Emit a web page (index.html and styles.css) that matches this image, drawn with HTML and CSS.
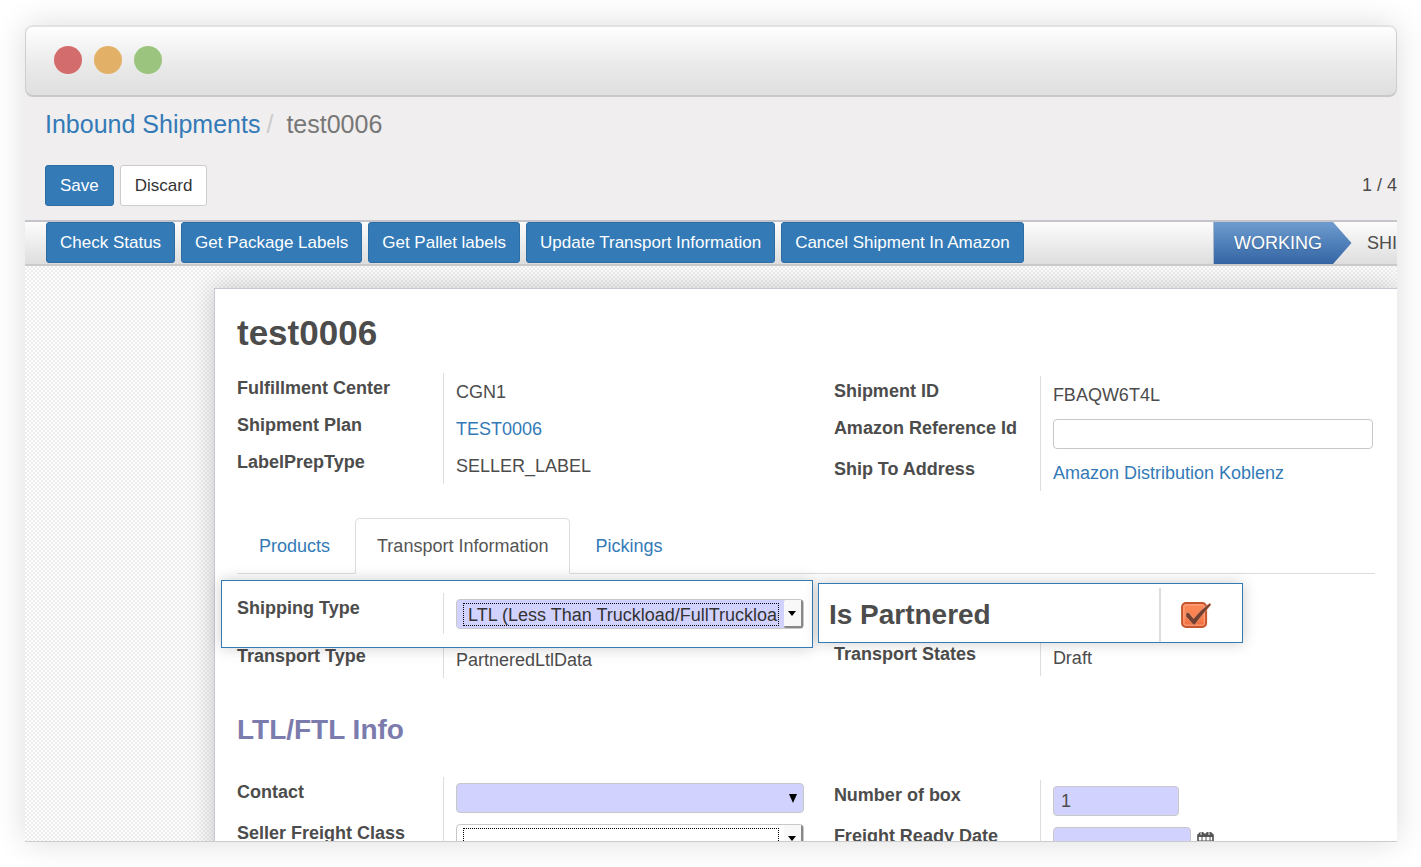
FILE: index.html
```html
<!DOCTYPE html>
<html lang="en">
<head>
<meta charset="utf-8">
<title>Inbound Shipments / test0006</title>
<link rel="stylesheet" href="styles.css">
</head>
<body>
<div class="window">
  <div class="titlebar">
    <span class="dot dot-red"></span>
    <span class="dot dot-amber"></span>
    <span class="dot dot-green"></span>
  </div>

  <header class="control-panel">
    <nav class="breadcrumb"><a href="#">Inbound Shipments</a><span class="slash">/</span><span class="current">test0006</span></nav>
    <div class="control-row">
      <div class="actions">
        <button class="btn btn-primary" type="button">Save</button>
        <button class="btn btn-default" type="button">Discard</button>
      </div>
      <span class="pager">1 / 4</span>
    </div>
  </header>

  <div class="statusbar">
    <div class="actions">
      <button class="btn btn-primary" type="button">Check Status</button>
      <button class="btn btn-primary" type="button">Get Package Labels</button>
      <button class="btn btn-primary" type="button">Get Pallet labels</button>
      <button class="btn btn-primary" type="button">Update Transport Information</button>
      <button class="btn btn-primary" type="button">Cancel Shipment In Amazon</button>
    </div>
    <div class="stages">
      <span class="stage-active">WORKING</span>
      <svg class="stage-arrow" viewBox="0 0 19 43" preserveAspectRatio="none" aria-hidden="true">
        <defs><linearGradient id="stage" x1="0" y1="0" x2="0" y2="1"><stop offset="0" stop-color="#6e9ccf"/><stop offset="1" stop-color="#3465a4"/></linearGradient></defs>
        <path d="M0 0L18.500 21.500L0 43Z" fill="url(#stage)"/>
      </svg>
      <span class="stage-next">SHI</span>
    </div>
  </div>

  <div class="backdrop">
    <main class="sheet">
      <h1 class="title">test0006</h1>

      <div class="groups">
        <div class="group">
          <div class="row"><span class="name">Fulfillment Center</span><span class="value">CGN1</span></div>
          <div class="row"><span class="name">Shipment Plan</span><span class="value"><a href="#">TEST0006</a></span></div>
          <div class="row"><span class="name">LabelPrepType</span><span class="value">SELLER_LABEL</span></div>
        </div>
        <div class="group">
          <div class="row"><span class="name">Shipment ID</span><span class="value">FBAQW6T4L</span></div>
          <div class="row"><label class="name" for="reference">Amazon Reference Id</label><span class="value field"><input class="input" id="reference" type="text"></span></div>
          <div class="row"><span class="name">Ship To Address</span><span class="value"><a href="#">Amazon Distribution Koblenz</a></span></div>
        </div>
      </div>

      <nav class="tabs">
        <a class="tab" href="#">Products</a>
        <a class="tab tab-active" href="#">Transport Information</a>
        <a class="tab" href="#">Pickings</a>
      </nav>

      <div class="groups transport">
        <div class="group">
          <div class="callout callout-type">
            <div class="row">
              <label class="name" for="shipping">Shipping Type</label>
              <span class="value field">
                <span class="combo required">
                  <select class="combo-select" id="shipping"><option>LTL (Less Than Truckload/FullTruckload)</option></select>
                  <span class="combo-arrow"></span>
                </span>
              </span>
            </div>
          </div>
          <div class="row"><span class="name">Transport Type</span><span class="value">PartneredLtlData</span></div>
        </div>
        <div class="group">
          <div class="callout callout-partnered">
            <label class="partnered-name" for="partnered">Is Partnered</label>
            <span class="partnered-value">
              <input class="check" id="partnered" type="checkbox" checked>
              <svg class="check-icon" viewBox="0 0 32 28" aria-hidden="true">
                <defs><linearGradient id="orange" x1="0" y1="0" x2="0" y2="1"><stop offset="0" stop-color="#f98a5c"/><stop offset=".6" stop-color="#fb7f4d"/><stop offset="1" stop-color="#e96a3c"/></linearGradient></defs>
                <rect x="1" y="1" width="25" height="25" rx="4" fill="url(#orange)" stroke="#c4552f" stroke-width="2"/>
                <rect x="3" y="3" width="21" height="21" rx="2" fill="none" stroke="#ffac87" stroke-width="1"/>
                <path d="M5 11L8 11L13 17Q20 8 30 1L31 3Q22 13 14 24L12 23L5 15Z" fill="#74402f" stroke="#ffb394" stroke-width=".6"/>
              </svg>
            </span>
          </div>
          <div class="row"><span class="name">Transport States</span><span class="value">Draft</span></div>
        </div>
      </div>

      <h2 class="section">LTL/FTL Info</h2>

      <div class="groups">
        <div class="group">
          <div class="row">
            <label class="name" for="contact">Contact</label>
            <span class="value field">
              <span class="picker">
                <input class="input required" id="contact" type="text">
                <svg class="picker-arrow" viewBox="0 0 8 9" aria-hidden="true"><path d="M0 0H8L4 9Z"/></svg>
              </span>
            </span>
          </div>
          <div class="row">
            <label class="name" for="freight">Seller Freight Class</label>
            <span class="value field">
              <span class="combo">
                <select class="combo-select" id="freight"><option></option></select>
                <span class="combo-arrow"></span>
              </span>
            </span>
          </div>
        </div>
        <div class="group">
          <div class="row"><label class="name" for="boxes">Number of box</label><span class="value field"><input class="input required input-number" id="boxes" type="text" value="1"></span></div>
          <div class="row">
            <label class="name" for="ready">Freight Ready Date</label>
            <span class="value field">
              <input class="input required input-date" id="ready" type="text">
              <svg class="calendar" viewBox="0 0 17 20" aria-hidden="true">
                <path d="M1 5H16V18H1Z" fill="#fff" stroke="#444" stroke-width="1.500"/>
                <path d="M1 7V4L3 2H6L8 4L10 2H14L16 4V7Z" fill="#555"/>
                <path d="M4 2V5M12 2V5" stroke="#eee"/>
                <path d="M1 11H16M1 14H16M5 7V18M9 7V18M13 7V18" stroke="#555"/>
              </svg>
            </span>
          </div>
        </div>
      </div>
    </main>
  </div>
</div>
</body>
</html>
```
FILE: styles.css
```css
* { box-sizing: border-box; }

body {
  margin: 0;
  padding: 25px 24px 25px 25px;
  background: #fff;
  color: #4c4c4c;
  font: 18px/22px "Liberation Sans", Arial, sans-serif;
}

a { color: #337ab7; text-decoration: none; }

button, input, select { font: inherit; color: inherit; }

.window {
  display: flex;
  flex-direction: column;
  height: calc(100vh - 50px);
  overflow: hidden;
  border-bottom: 1px solid #ccc;
  border-radius: 8px 8px 0 0;
  background: #f0eeee;
  box-shadow: 0 0 32px rgba(0, 0, 0, .14);
}

.titlebar {
  display: flex;
  flex: none;
  align-items: center;
  gap: 12px;
  height: 72px;
  padding: 0 28px 2px;
  border: 1px solid #cfcfcf;
  border-top: 2px solid #e2e2e2;
  border-bottom: 2px solid #c9c9c9;
  border-radius: 8px;
  background: linear-gradient(#fefefe, #e9e9e9 60%, #dfdfdf);
}

.dot { width: 28px; height: 28px; border-radius: 50%; }
.dot-red { background: #d36c6c; }
.dot-amber { background: #e2b167; }
.dot-green { background: #9bc57e; }

.control-panel {
  flex: none;
  padding: 12px 0 14px 20px;
  border-bottom: 2px solid #c4c4ca;
}

.breadcrumb { font-size: 25px; line-height: 30px; }
.breadcrumb .slash { margin: 0 13px 0 6px; color: #ccc; }
.breadcrumb .current { color: #777; }

.control-row {
  display: flex;
  align-items: center;
  justify-content: space-between;
  margin-top: 26px;
}

.pager { margin-bottom: 2px; }

.actions { display: flex; gap: 6px; }

.btn {
  height: 41px;
  padding: 0 14px;
  border: 1px solid #2e6da4;
  border-radius: 3px;
  font-size: 17px;
  white-space: nowrap;
}
.btn-primary { background: #337ab7; color: #fff; }
.btn-default { border-color: #ccc; background: #fff; color: #333; }

.statusbar {
  display: flex;
  flex: none;
  justify-content: space-between;
  height: 44px;
  padding-left: 21px;
  border-bottom: 2px solid #cacaca;
  background: linear-gradient(#fcfcfc, #dedede);
}
.statusbar .btn { padding: 0 13px; }

.stages { display: flex; align-items: center; }
.stage-active {
  align-self: stretch;
  padding: 0 11px 0 20px;
  border-left: 1px solid #a9b9cc;
  background: linear-gradient(#6e9ccf, #3465a4);
  color: #fff;
  line-height: 43px;
  text-shadow: 0 1px 1px rgba(0, 0, 0, .2);
}
.stage-arrow { width: 19px; height: 100%; }
.stage-next { padding-left: 15px; }

.backdrop {
  flex: 1 0 auto;
  padding: 22px 0 0 189px;
  background: repeating-conic-gradient(#eee 0 25%, #fcfcfc 0 50%) 0 0 / 4px 4px;
}

.sheet {
  padding: 24px 22px 40px;
  border: 1px solid #c8c8d3;
  border-right: 0;
  background: #fff;
  box-shadow: 0 0 24px rgba(0, 0, 0, .2);
}

.title { margin: 0 0 20px; font-size: 35px; line-height: 40px; }

.groups {
  display: grid;
  grid-template-columns: 22fr 21fr;
  gap: 30px;
  align-items: start;
}
.group { min-width: 0; }
.group + .group { padding-top: 3px; }

.row { display: grid; grid-template-columns: 206px 1fr; }
.name { padding-top: 4px; font-weight: bold; }
.value {
  min-width: 0;
  padding: 8px 0 7px 12px;
  border-left: 1px solid #ddd;
}
.field { display: flex; gap: 6px; padding: 6px 0 5px 12px; }

.input {
  width: 100%;
  height: 30px;
  padding: 0 7px;
  border: 1px solid #c8c8c8;
  border-radius: 4px;
  background: #fff;
}
.required, .input.required { background: #d2d2ff; }
.group + .group .input { margin-right: 2px; }
.group + .group .input-number { width: 126px; }
.group + .group .input-date { width: 138px; margin-right: 0; }

.tabs {
  display: flex;
  gap: 3px;
  margin-top: 27px;
  border-bottom: 1px solid #ddd;
}
.tab {
  margin-bottom: -1px;
  padding: 16px 21px;
  border: 1px solid transparent;
  border-radius: 5px 5px 0 0;
}
.tab-active {
  border-color: #ddd #ddd #fff;
  background: #fff;
  color: #555;
}

.transport { padding-top: 6px; }

.callout {
  position: relative;
  border: 1px solid #337ab7;
  background: #fff;
  box-shadow: 0 0 14px rgba(0, 0, 0, .2);
}
.callout-type { margin: 0 -9px -7px -16px; padding: 12px 8px 13px 15px; }
.callout-partnered {
  display: flex;
  width: 425px;
  height: 60px;
  margin: 0 0 -4px -16px;
  padding: 4px 0 0 10px;
}
.partnered-name { flex: 1; font-size: 28px; font-weight: bold; line-height: 54px; }
.partnered-value {
  display: grid;
  align-items: center;
  width: 83px;
  padding-left: 20px;
  border-left: 2px solid #ddd;
}
.check, .check-icon { grid-area: 1 / 1; width: 31px; height: 27px; margin: 0; }
.check { opacity: 0; }
.check-icon { pointer-events: none; }

.combo {
  display: flex;
  width: 100%;
  height: 30px;
  border: 1px solid #c8c8c8;
  border-radius: 4px;
}
.combo:not(.required) { background: #fff; }
.combo-select {
  flex: 1;
  min-width: 0;
  height: 23px;
  margin: 3px 5px 0 6px;
  padding: 0 0 0 4px;
  border: 1px dotted #000;
  background: transparent;
  appearance: none;
  color: #333;
}
.combo-arrow {
  display: grid;
  place-items: center;
  width: 19px;
  border: solid #888;
  border-width: 0 2px 2px 0;
  border-radius: 2px;
  background: #f8f8f8;
}
.combo-arrow::before {
  content: "";
  border: 4px solid transparent;
  border-top: 5px solid #000;
  border-bottom: 0;
}

.picker { display: grid; width: 100%; align-items: center; }
.picker .input, .picker-arrow { grid-area: 1 / 1; }
.picker-arrow { justify-self: end; width: 8px; height: 9px; margin-right: 7px; }

.section {
  margin: 36px 0 31px;
  color: #7c7bad;
  font-size: 28px;
  line-height: 32px;
}

.calendar { width: 17px; height: 20px; margin-top: 3px; }
```
